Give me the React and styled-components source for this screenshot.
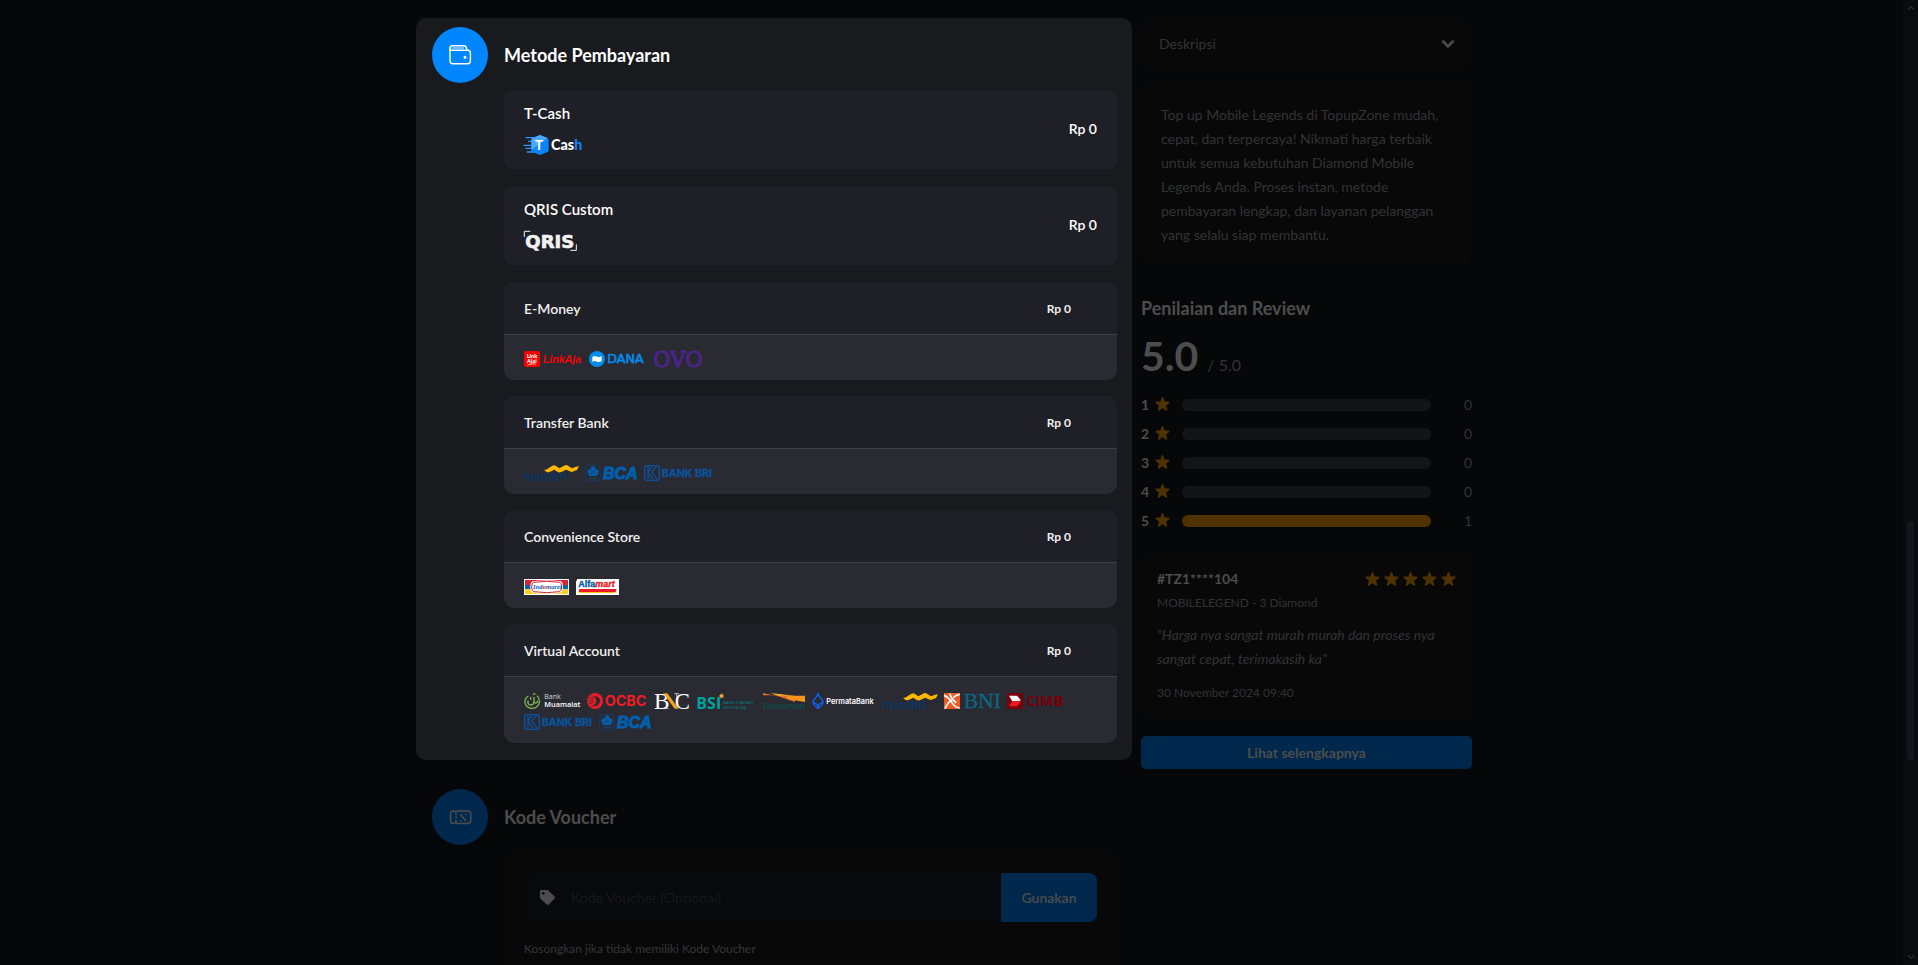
import { useState } from "react";
import styled, { createGlobalStyle } from "styled-components";
import { FaChevronDown, FaChevronUp, FaTag } from "react-icons/fa";
import { HiStar } from "react-icons/hi";

const GlobalStyle = createGlobalStyle`
  * {
    box-sizing: border-box;
  }
  body {
    margin: 0;
    background-color: #060709;
    color: #fff;
    font-family: Lato, "Liberation Sans", sans-serif;
    font-size: 14px;
    line-height: 20px;
  }
  h2, h3, p {
    margin: 0;
  }
  button, input {
    font-family: inherit;
    border: none;
  }
  button {
    cursor: pointer;
  }
`;

const Page = styled.div`
  display: flex;
  height: 100vh;
  overflow: hidden;
`;

const Main = styled.main`
  flex: 1;
  padding: 18px 15px 0 0;
`;

const Container = styled.div`
  display: flex;
  align-items: flex-start;
  gap: 9px;
  max-width: 1056px;
  margin: 0 auto;
`;

const LeftColumn = styled.div`
  flex: 1;
  min-width: 0;
`;

const RightColumn = styled.aside`
  width: 331px;
  padding-top: 3px;
`;

const Section = styled.section`
  padding: 9px 15px 17px 16px;
  margin-bottom: 20px;
  border-radius: 10px;
  background-color: ${(props) => (props.$active ? "#191a1e" : "transparent")};
`;

const SectionHeader = styled.div`
  display: flex;
  align-items: center;
  gap: 16px;
  margin-bottom: 8px;
`;

const Step = styled.div`
  display: flex;
  align-items: center;
  justify-content: center;
  width: 56px;
  height: 56px;
  border-radius: 50%;
  color: ${(props) => (props.$active ? "#fff" : "#4d4d4d")};
  background-color: ${(props) => (props.$active ? "#0087ff" : "#00284c")};
`;

const SectionTitle = styled.h2`
  font-size: 18px;
  line-height: 24px;
  font-weight: 700;
  color: ${(props) => (props.$active ? "#fff" : "#4d4d4d")};
`;

const SectionBody = styled.div`
  margin-left: 72px;
`;

const MethodList = styled.div`
  display: flex;
  flex-direction: column;
  gap: ${(props) => props.$gap}px;
  margin-bottom: ${(props) => props.$bottom || 0}px;
`;

const Method = styled.button`
  display: flex;
  align-items: center;
  justify-content: space-between;
  padding: 12px 20px 14px;
  border-radius: 8px;
  background-color: #1f1f27;
  color: #fff;
  text-align: left;
  font-size: 15px;
  line-height: 20px;
  font-weight: 600;
`;

const MethodInfo = styled.span`
  display: flex;
  flex-direction: column;
  gap: 12px;
`;

const MethodPrice = styled.span`
  font-size: 14px;
`;

const Group = styled.div`
  border-radius: 10px;
  overflow: hidden;
  background-color: #2a2a33;
`;

const GroupHeader = styled.button`
  display: flex;
  align-items: center;
  justify-content: space-between;
  width: 100%;
  height: 53px;
  padding: 0 46px 0 20px;
  border-bottom: 1px solid #3f3f48;
  background-color: #1f1f27;
  color: #f0f0f0;
  font-size: 14px;
  font-weight: 600;
`;

const GroupPrice = styled.span`
  font-size: 12px;
  font-weight: 700;
`;

const LogoStrip = styled.div`
  display: flex;
  flex-wrap: wrap;
  gap: 5px 7px;
  padding: 16px 46px 13px 20px;
`;

const LogoSvg = styled.svg`
  display: block;
  overflow: visible;
`;

const VoucherBox = styled.div`
  padding: 20px;
  border-radius: 10px;
  background-color: #080809;
`;

const VoucherForm = styled.form`
  display: flex;
  height: 49px;
  border-radius: 8px;
  overflow: hidden;
  background-color: #08090d;
`;

const VoucherLabel = styled.label`
  display: flex;
  align-items: center;
  justify-content: center;
  width: 46px;
  color: #4d4d4d;
`;

const VoucherInput = styled.input`
  flex: 1;
  min-width: 0;
  padding: 0 1px;
  background-color: transparent;
  color: #4d4d4d;
  font-size: 14px;
  outline: none;

  &::placeholder {
    color: #17181b;
    opacity: 1;
  }
`;

const VoucherButton = styled.button`
  width: 96px;
  background-color: #00284c;
  color: #4d4d4d;
  font-size: 14px;
  font-weight: 600;
`;

const Hint = styled.p`
  padding-top: 17px;
  color: #363636;
  font-size: 12px;
`;

const Accordion = styled.button`
  display: flex;
  align-items: center;
  justify-content: space-between;
  width: 100%;
  height: 47px;
  padding: 0 17px 2px 18px;
  margin-bottom: 15px;
  border-radius: 8px;
  background-color: #080809;
  color: #333;
  font-size: 14px;
`;

const Chevron = styled(FaChevronDown)`
  width: 14px;
  height: 14px;
  color: #4d4d4d;
`;

const Description = styled.p`
  padding: 20px 20px 18px;
  margin-bottom: 31px;
  border-radius: 8px;
  background-color: #080809;
  color: #333;
  font-size: 14px;
  line-height: 24px;
`;

const ReviewTitle = styled.h3`
  color: #4d4d4d;
  font-size: 18px;
  line-height: 24px;
  font-weight: 700;
`;

const Score = styled.div`
  display: flex;
  align-items: baseline;
  gap: 9px;
  margin: 12px 0 1px;
  color: #4d4d4d;
  font-size: 41px;
  line-height: 48px;
  font-weight: 700;
`;

const ScoreMax = styled.span`
  color: #333;
  font-size: 16px;
  font-weight: 400;
`;

const RatingRow = styled.div`
  display: flex;
  align-items: center;
  height: 29px;
`;

const RatingLabel = styled.span`
  display: flex;
  align-items: center;
  gap: 4px;
  width: 41px;
  color: #4d4d4d;
  font-size: 14px;
  font-weight: 700;
`;

const RatingTrack = styled.div`
  flex: 1;
  height: 12px;
  border-radius: 6px;
  overflow: hidden;
  background-color: #131418;
`;

const RatingFill = styled.div`
  height: 100%;
  background-color: #4f3200;
`;

const RatingCount = styled.span`
  width: 41px;
  color: #333;
  font-size: 14px;
  text-align: right;
`;

const Star = styled(HiStar)`
  flex: none;
  width: 19px;
  height: 19px;
  color: #4f3200;
`;

const Review = styled.article`
  padding: 14px 14px 14px 16px;
  margin: 20px 0 19px;
  border-radius: 8px;
  background-color: #080809;
  color: #333;
`;

const ReviewHeader = styled.div`
  display: flex;
  align-items: center;
  justify-content: space-between;
`;

const ReviewUser = styled.span`
  color: #4d4d4d;
  font-size: 14px;
  font-weight: 700;
`;

const Stars = styled.span`
  display: flex;
`;

const ReviewMeta = styled.p`
  padding-top: ${(props) => props.$top}px;
  font-size: 12px;
`;

const Quote = styled.p`
  padding-top: 10px;
  font-size: 14px;
  line-height: 24px;
  font-style: italic;
`;

const MoreButton = styled.button`
  width: 100%;
  height: 33px;
  border-radius: 5px;
  background-color: #00284c;
  color: #4d4d4d;
  font-size: 14px;
  font-weight: 700;
`;

const ScrollRail = styled.div`
  display: flex;
  flex-direction: column;
  align-items: center;
  width: 15px;
  padding: 4px 0;
  background-color: #0a0b0f;
  color: #2a2b2d;
`;

const ScrollThumb = styled.div`
  width: 7px;
  height: 240px;
  margin: auto 0 192px;
  border-radius: 4px;
  background-color: #15161d;
`;

// Brand marks are drawn in units of a third of a pixel
const Logo = ({ w, h = 48, label, children }) => (
  <LogoSvg width={w / 3} height={h / 3} viewBox={`0 0 ${w} ${h}`} role="img" aria-label={label}>
    {children}
  </LogoSvg>
);

const TCash = () => (
  <Logo w={177} h={60} label="T-Cash">
    <path d="M6 8h30M14 19h20M0 31h24M6 40h22M10 51h26" stroke="#2f95ff" strokeWidth="4" strokeLinecap="round" />
    <path d="M48 0 70 9q4 2 4 6v30q0 4-4 6L48 60 26 51q-4-2-4-6V15q0-4 4-6z" fill="#0a84ff" />
    <path d="M48 0 70 9 22 46V15q0-4 4-6z" fill="#4aa8ff" />
    <text x="33" y="44" fontFamily="Lato" fontWeight="900" fontSize="40" fill="#fff">T</text>
    <text x="81" y="44" fontFamily="Lato" fontWeight="900" fontSize="43" fill="#fff">
      Cas<tspan fill="#0a84ff">h</tspan>
    </text>
  </Logo>
);

const Qris = () => (
  <Logo w={159} h={60} label="QRIS">
    <path d="M1 18V1h18M157 40v18h-18" fill="none" stroke="#f2f2f2" strokeWidth="3" />
    <text x="4" y="50" fontFamily="DejaVu Sans" fontWeight="700" fontSize="54" fill="#f2f2f2" stroke="#f2f2f2" strokeWidth="2">QRIS</text>
  </Logo>
);

const LinkAja = () => (
  <Logo w={174} label="LinkAja">
    <rect width="48" height="48" rx="5" fill="#f80000" />
    <text x="8" y="22" fontFamily="Lato" fontWeight="900" fontSize="17" fill="#fff">Link</text>
    <text x="9" y="37" fontFamily="Lato" fontWeight="900" fontSize="17" fill="#fff">Aja!</text>
    <path d="M10 42q14-4 26-3" stroke="#fff" strokeWidth="2" fill="none" />
    <text x="56" y="36" fontFamily="Liberation Sans" fontStyle="italic" fontWeight="700" fontSize="32" fill="#f80000">LinkAja</text>
  </Logo>
);

const Dana = () => (
  <Logo w={171} label="DANA">
    <circle cx="24" cy="24" r="24" fill="#008ceb" />
    <path d="M10 18q7-5 14-1 8 3 14-2v15q-6 5-14 2-8-4-14 1z" fill="#fff" />
    <text x="55" y="37" fontFamily="DejaVu Sans" fontSize="38" fill="#008ceb" stroke="#008ceb" strokeWidth="2">DANA</text>
  </Logo>
);

const Ovo = () => (
  <Logo w={156} label="OVO">
    <text x="0" y="47" fontFamily="DejaVu Serif" fontSize="64" fill="#4b2489" stroke="#4b2489" strokeWidth="3">OVO</text>
  </Logo>
);

const Mandiri = () => (
  <Logo w={162} label="mandiri">
    <text x="-2" y="47" fontFamily="Inter" fontWeight="500" fontSize="37" fill="#06376b">mandiri</text>
    <path d="M66 14 84 3q6-4 12 0l10 7 14-8q6-4 12 0l12 8 12-5 9-1-6 11-16 6-17-7-14 7q-7 3-12-1l-9-6-16 8q-8 1-15-8z" fill="#ffb700" />
  </Logo>
);

const Bca = () => (
  <Logo w={156} label="BCA">
    <rect x="1" y="1" width="45" height="46" rx="11" fill="none" stroke="#0d4379" strokeWidth="2" />
    <g fill="#0060ae">
      <circle cx="24" cy="11" r="7" />
      <circle cx="14" cy="20" r="7" />
      <circle cx="34" cy="20" r="7" />
      <path d="M22 16h4v10h14l-6 7H14l-6-7h14z" />
      <path d="M12 38h24v3H12z" opacity=".6" />
    </g>
    <text x="54" y="42" fontFamily="Liberation Sans" fontStyle="italic" fontWeight="700" fontSize="48" fill="#0060ae" stroke="#0060ae" strokeWidth="3">BCA</text>
  </Logo>
);

const Bri = () => (
  <Logo w={204} label="BANK BRI">
    <rect x="2" y="2" width="44" height="44" rx="7" fill="none" stroke="#0a529c" strokeWidth="4" />
    <path d="M12 4v40M24 4 14 18q-3 5 2 9l12 17M38 4 26 17q-4 5 1 9l13 18" fill="none" stroke="#0a529c" strokeWidth="4" />
    <text x="53" y="36" fontFamily="Inter" fontWeight="700" fontSize="32" fill="#0a529c" stroke="#0a529c">BANK BRI</text>
  </Logo>
);

const Indomaret = () => (
  <Logo w={135} label="Indomaret">
    <rect width="135" height="48" fill="#fff" />
    <path d="M3 3h129v15H3z" fill="#dc2031" />
    <path d="M3 18h129v13H3z" fill="#0f62b0" />
    <path d="M3 31h129v14H3z" fill="#ffce20" />
    <path d="M26 7q42-7 84 0 7 2 7 17t-7 17q-42 7-84 0-7-2-7-17t7-17z" fill="#fff" />
    <path d="M29 10q39-6 78 0 6 2 6 14t-6 14q-39 6-78 0-6-2-6-14t6-14z" fill="#fff" stroke="#dc2031" strokeWidth="3" />
    <text x="27" y="31" fontFamily="Liberation Serif" fontStyle="italic" fontWeight="700" fontSize="20" fill="#0f62b0">
      Ind<tspan fill="#dc2031">o</tspan>maret
    </text>
  </Logo>
);

const Alfamart = () => (
  <Logo w={129} label="Alfamart">
    <path d="M4 0h125v48H0V8z" fill="#fff" />
    <text x="7" y="25" fontFamily="Liberation Sans" fontWeight="700" fontSize="27" fill="#0058a8" stroke="#0058a8">
      Alfa<tspan fontStyle="italic" fill="#ed1c24" stroke="#ed1c24">mart</tspan>
    </text>
    <path d="M10 30h112l-3 9H8z" fill="#ed1c24" />
    <path d="M8 39h111l-2 3H10z" fill="#ffc20e" />
  </Logo>
);

const Muamalat = () => (
  <Logo w={168} label="Bank Muamalat">
    <path d="M13 9Q1 17 3 29q3 15 19 17 18 0 23-14 4-13-6-24M12 22q-2 14 9 14 9 0 9-12V12M30 26q6 10 11-3M20 20v-8M27 5l7-4" fill="none" stroke="#78b94a" strokeWidth="4" />
    <text x="61" y="19" fontFamily="Open Sans" fontSize="21" fill="#d5d5d8">Bank</text>
    <text x="61" y="43" fontFamily="Open Sans" fontWeight="600" fontSize="22" fill="#fff">Muamalat</text>
  </Logo>
);

const Ocbc = () => (
  <Logo w={180} label="OCBC">
    <circle cx="24" cy="24" r="24" fill="#ee1c25" />
    <path d="M20 9q20 1 19 15-1 15-22 17 11-9 11-17T20 9z" fill="#2a2a33" />
    <path d="M0 14l20 6M-1 24h20M1 34l19-6M8 5l14 11M10 44l13-11" stroke="#2a2a33" strokeWidth="2" />
    <text x="53" y="38" fontFamily="Inter" fontWeight="700" fontSize="43" fill="#ee1c25">OCBC</text>
  </Logo>
);

const Bnc = () => (
  <Logo w={108} label="BNC">
    <text x="0" y="47" fontFamily="Liberation Serif" fontSize="70" fill="#fff">B</text>
    <text x="62" y="47" fontFamily="Liberation Serif" fontSize="68" fill="#fff">C</text>
    <path d="M28 1h12l34 46H62z" fill="#f6a21c" />
    <path d="M61 2h14M68 2v34M30 46h14" stroke="#fff" strokeWidth="2" />
  </Logo>
);

const Bsi = () => (
  <Logo w={177} label="Bank Syariah Indonesia">
    <text x="-2" y="48" fontFamily="Open Sans" fontWeight="700" fontSize="48" fill="#00a39d">BSI</text>
    <path d="M73 0l2 5 6-1-3 5 3 5-6-1-4 4-1-6-5-2 5-3z" fill="#fbac36" />
    <text x="78" y="34" fontFamily="Open Sans" fontSize="13" fill="#00857f">BANK SYARIAH</text>
    <text x="78" y="47" fontFamily="Open Sans" fontSize="13" fill="#00857f">INDONESIA</text>
  </Logo>
);

const Danamon = () => (
  <Logo w={126} label="Danamon">
    <path d="M0 0 26 7H0z" fill="#ee7125" />
    <path d="M22 0 94 8 46 9z" fill="#ffb024" />
    <path d="M0 3 46 8h50v19L46 10z" fill="#ee7125" />
    <path d="M70 8h56v19L76 19z" fill="#f7941e" />
    <text x="-1" y="47" fontFamily="Liberation Sans" fontWeight="700" fontSize="28" fill="#0b4b41">Danamon</text>
  </Logo>
);

const Permata = () => (
  <Logo w={192} label="PermataBank">
    <path d="M18 2q3 10 10 16 7 7 5 12-4 10-15 16Q7 40 3 30q-2-5 5-12 7-6 10-16zM4 29q9 0 14 12 5-12 14-12" fill="none" stroke="#0b62f5" strokeWidth="4" />
    <text x="43" y="32" fontFamily="Inter" fontWeight="600" fontSize="22" fill="#fff">PermataBank</text>
  </Logo>
);

const Bni = () => (
  <Logo w={168} label="BNI">
    <rect width="48" height="48" fill="#f15a23" />
    <path d="M0 7q16 8 24 22t23 16M17 1q6 20 20 28M3 47q10-22 22-27M28 14q7-8 19-10" fill="none" stroke="#fff" strokeWidth="5" />
    <text x="59" y="46" fontFamily="Liberation Serif" fontSize="65" fill="#0b6681" stroke="#0b6681">BNI</text>
  </Logo>
);

const Cimb = () => (
  <Logo w={171} label="CIMB">
    <rect width="48" height="48" fill="#780009" />
    <path d="M6 8h24l12 14-10 3H16z" fill="#fff" />
    <path d="M16 25h26L30 40H6z" fill="#ed1c24" />
    <text x="58" y="39" fontFamily="Open Sans" fontWeight="700" fontSize="43" fill="#780009">CIMB</text>
  </Logo>
);

const WalletIcon = () => (
  <svg width="24" height="24" viewBox="0 0 24 24" fill="none" stroke="currentColor" strokeWidth="1.4">
    <path d="M2 8V5.4C2 3.8 3 2.8 4.6 2.8h11.2c1.5 0 2.4.8 2.7 2.2l.4 2" />
    <path d="M4 5h12" strokeOpacity=".6" />
    <path d="M2 6.4c.3.5 1 .8 2 .8h15.500c1.700 0 2.900 1.100 2.900 2.800v7.800c0 1.800-1.100 2.900-2.900 2.900H4.900c-1.800 0-2.900-1.100-2.900-2.900z" />
    <circle cx="17" cy="14.3" r=".8" fill="currentColor" />
  </svg>
);

const TicketIcon = () => (
  <svg width="24" height="24" viewBox="0 0 24 24" fill="none" stroke="currentColor" strokeWidth="1.5">
    <path d="M9 5.900h10.800c1.800 0 2.900 1.100 2.900 2.900v6.700c0 1.800-1.100 2.900-2.900 2.900H9c-.2-.7-.7-1-1.300-1s-1.100.3-1.300 1H5c-1.500 0-2.400-1-2.400-2.600V7.900c0-1.300.9-2 2.200-2h1.600c.2.700.7 1 1.300 1s1.100-.3 1.300-1z" />
    <path d="M8 8v2M8 11.500v2M8 15v2" />
    <path d="M12.500 9.500l5.500 6.500" />
    <path d="M17 9.300h1.500M12.200 15.800h1.500" />
  </svg>
);

const methods = [
  { name: "T-Cash", price: "Rp 0", Mark: TCash },
  { name: "QRIS Custom", price: "Rp 0", Mark: Qris },
];

const groups = [
  { name: "E-Money", logos: [LinkAja, Dana, Ovo] },
  { name: "Transfer Bank", logos: [Mandiri, Bca, Bri] },
  { name: "Convenience Store", logos: [Indomaret, Alfamart] },
  {
    name: "Virtual Account",
    logos: [Muamalat, Ocbc, Bnc, Bsi, Danamon, Permata, Mandiri, Bni, Cimb, Bri, Bca],
  },
];

const ratings = [
  { star: 1, count: 0 },
  { star: 2, count: 0 },
  { star: 3, count: 0 },
  { star: 4, count: 0 },
  { star: 5, count: 1 },
];

const totalReviews = ratings.reduce((sum, rating) => sum + rating.count, 0);

export default function App() {
  const [voucher, setVoucher] = useState("");
  const [showDescription, setShowDescription] = useState(true);

  return (
    <>
      <GlobalStyle />
      <Page>
        <Main>
          <Container>
            <LeftColumn>
              <Section $active>
                <SectionHeader>
                  <Step $active>
                    <WalletIcon />
                  </Step>
                  <SectionTitle $active>Metode Pembayaran</SectionTitle>
                </SectionHeader>
                <SectionBody>
                  <MethodList $gap={18} $bottom={17}>
                    {methods.map(({ name, price, Mark }) => (
                      <Method key={name} type="button">
                        <MethodInfo>
                          {name}
                          <Mark />
                        </MethodInfo>
                        <MethodPrice>{price}</MethodPrice>
                      </Method>
                    ))}
                  </MethodList>
                  <MethodList $gap={16}>
                    {groups.map((group) => (
                      <Group key={group.name}>
                        <GroupHeader type="button">
                          {group.name}
                          <GroupPrice>Rp 0</GroupPrice>
                        </GroupHeader>
                        <LogoStrip>
                          {group.logos.map((Mark, index) => (
                            <Mark key={index} />
                          ))}
                        </LogoStrip>
                      </Group>
                    ))}
                  </MethodList>
                </SectionBody>
              </Section>

              <Section>
                <SectionHeader>
                  <Step>
                    <TicketIcon />
                  </Step>
                  <SectionTitle>Kode Voucher</SectionTitle>
                </SectionHeader>
                <SectionBody>
                  <VoucherBox>
                    <VoucherForm onSubmit={(e) => e.preventDefault()}>
                      <VoucherLabel htmlFor="voucher" aria-label="Kode Voucher">
                        <FaTag size={15} />
                      </VoucherLabel>
                      <VoucherInput
                        id="voucher"
                        placeholder="Kode Voucher (Optional)"
                        value={voucher}
                        onChange={(e) => setVoucher(e.target.value)}
                      />
                      <VoucherButton type="submit">Gunakan</VoucherButton>
                    </VoucherForm>
                    <Hint>Kosongkan jika tidak memiliki Kode Voucher</Hint>
                  </VoucherBox>
                </SectionBody>
              </Section>
            </LeftColumn>

            <RightColumn>
              <Accordion
                type="button"
                aria-expanded={showDescription}
                onClick={() => setShowDescription(!showDescription)}
              >
                Deskripsi
                <Chevron stroke="currentColor" strokeWidth="24" />
              </Accordion>
              {showDescription && (
                <Description>
                  Top up Mobile Legends di TopupZone mudah, cepat, dan terpercaya! Nikmati harga
                  terbaik untuk semua kebutuhan Diamond Mobile Legends Anda. Proses instan, metode
                  pembayaran lengkap, dan layanan pelanggan yang selalu siap membantu.
                </Description>
              )}

              <ReviewTitle>Penilaian dan Review</ReviewTitle>
              <Score>
                5.0 <ScoreMax>/ 5.0</ScoreMax>
              </Score>
              {ratings.map((rating) => (
                <RatingRow key={rating.star}>
                  <RatingLabel>
                    {rating.star}
                    <Star />
                  </RatingLabel>
                  <RatingTrack>
                    <RatingFill style={{ width: `${(rating.count / totalReviews) * 100}%` }} />
                  </RatingTrack>
                  <RatingCount>{rating.count}</RatingCount>
                </RatingRow>
              ))}

              <Review>
                <ReviewHeader>
                  <ReviewUser>#TZ1****104</ReviewUser>
                  <Stars>
                    {[1, 2, 3, 4, 5].map((star) => (
                      <Star key={star} />
                    ))}
                  </Stars>
                </ReviewHeader>
                <ReviewMeta $top={4}>MOBILELEGEND - 3 Diamond</ReviewMeta>
                <Quote>"Harga nya sangat murah murah dan proses nya sangat cepat, terimakasih ka"</Quote>
                <ReviewMeta $top={12}>30 November 2024 09:40</ReviewMeta>
              </Review>
              <MoreButton type="button">Lihat selengkapnya</MoreButton>
            </RightColumn>
          </Container>
        </Main>
        <ScrollRail aria-hidden="true">
          <FaChevronUp size={8} />
          <ScrollThumb />
          <FaChevronDown size={8} />
        </ScrollRail>
      </Page>
    </>
  );
}
